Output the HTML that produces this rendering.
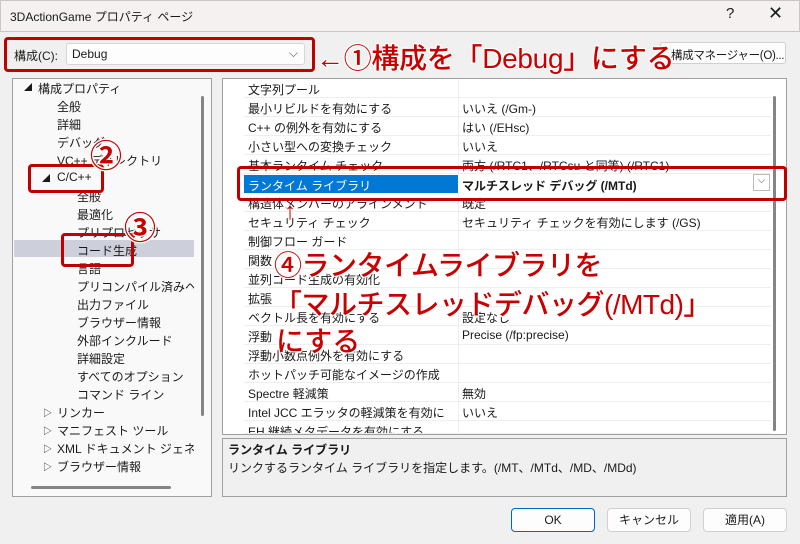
<!DOCTYPE html>
<html><head><meta charset="utf-8"><style>
*{margin:0;padding:0;box-sizing:border-box}
body{width:800px;height:544px;overflow:hidden;background:#f0f0f0;font-family:"Liberation Sans","Noto Sans CJK JP",sans-serif;font-size:12px;color:#1a1a1a;position:relative}
.a{position:absolute;white-space:nowrap}
.title{left:0;top:0;width:800px;height:32px;background:#f4f1f0;border:1px solid #c8c8c8}
.red{color:#c80000;font-weight:500;text-shadow:0 0 2px #fff,0 0 2px #fff,1px 1px 0 #fff,-1px -1px 0 #fff,1px -1px 0 #fff,-1px 1px 0 #fff}
.rbox{position:absolute;border:3px solid #c00000;border-radius:4px}
.row{position:absolute;left:244px;width:527px;height:19px;border-bottom:1px solid #eeeeee;overflow:hidden}
.row span{position:absolute;top:2px;overflow:hidden}
.n{left:4px;width:208px}.v{left:218px}
.t{position:absolute;font-size:12px;white-space:nowrap}
.btn{position:absolute;top:508px;width:84px;height:24px;background:#fdfdfd;border:1px solid #d0d0d0;border-radius:4px;text-align:center;line-height:22px}
</style></head><body>
<div class="a title"></div>
<div class="a" style="left:10px;top:8px;font-size:12px">3DActionGame プロパティ ページ</div>
<div class="a" style="left:726px;top:5px;font-size:15px">?</div>
<div class="a" style="left:768px;top:3px;font-size:18px;font-weight:300">✕</div>

<div class="a" style="left:14px;top:47px">構成(C):</div>
<div class="a" style="left:66px;top:43px;width:239px;height:22px;background:#fdfdfd;border:1px solid #d6d6d6;border-radius:3px"><span style="position:absolute;left:5px;top:3px">Debug</span><span style="position:absolute;right:6px;top:2px;color:#555">⌵</span></div>
<div class="rbox" style="left:4px;top:37px;width:311px;height:35px"></div>
<div class="a" style="left:660px;top:42px;width:126px;height:22px;background:#fdfdfd;border:1px solid #d0d0d0;border-radius:3px;padding:4px 0 0 10px;overflow:hidden;font-size:11.5px;letter-spacing:-0.3px">構成マネージャー(O)...</div>
<div class="a red" style="left:316px;top:37px;font-size:28px;letter-spacing:-0.3px">←①構成を「Debug」にする</div>

<!-- tree -->
<div class="a" style="left:12px;top:78px;width:200px;height:419px;border:1px solid #a0a0a0;background:#f9f9f9;overflow:hidden">
<div style="position:absolute;left:0;top:0;width:181px;height:396px;overflow:hidden">
<div class="a" style="left:1px;top:161px;width:180px;height:17px;background:#cdd0da"></div>
<div class="t" style="left:11px;top:3px;font-size:8px">◢</div><div class="t" style="left:25px;top:1px">構成プロパティ</div>
<div class="t" style="left:44px;top:19px">全般</div>
<div class="t" style="left:44px;top:37px">詳細</div>
<div class="t" style="left:44px;top:55px">デバッグ</div>
<div class="t" style="left:44px;top:73px">VC++ ディレクトリ</div>
<div class="t" style="left:29px;top:94px;font-size:8px">◢</div><div class="t" style="left:44px;top:91px">C/C++</div>
<div class="t" style="left:64px;top:109px">全般</div>
<div class="t" style="left:64px;top:127px">最適化</div>
<div class="t" style="left:64px;top:145px">プリプロセッサ</div>
<div class="t" style="left:64px;top:163px">コード生成</div>
<div class="t" style="left:64px;top:181px">言語</div>
<div class="t" style="left:64px;top:199px">プリコンパイル済みヘッダー</div>
<div class="t" style="left:64px;top:217px">出力ファイル</div>
<div class="t" style="left:64px;top:235px">ブラウザー情報</div>
<div class="t" style="left:64px;top:253px">外部インクルード</div>
<div class="t" style="left:64px;top:271px">詳細設定</div>
<div class="t" style="left:64px;top:289px">すべてのオプション</div>
<div class="t" style="left:64px;top:307px">コマンド ライン</div>
<div class="t" style="left:30px;top:327px;font-size:9px">▷</div><div class="t" style="left:44px;top:325px">リンカー</div>
<div class="t" style="left:30px;top:345px;font-size:9px">▷</div><div class="t" style="left:44px;top:343px">マニフェスト ツール</div>
<div class="t" style="left:30px;top:363px;font-size:9px">▷</div><div class="t" style="left:44px;top:361px">XML ドキュメント ジェネレーター</div>
<div class="t" style="left:30px;top:381px;font-size:9px">▷</div><div class="t" style="left:44px;top:379px">ブラウザー情報</div>
</div>
<div class="a" style="left:188px;top:17px;width:3px;height:320px;background:#858585;border-radius:2px"></div>
<div class="a" style="left:18px;top:407px;width:140px;height:3px;background:#858585;border-radius:2px"></div>
</div>
<div class="rbox" style="left:28px;top:164px;width:76px;height:29px"></div>
<div class="rbox" style="left:61px;top:233px;width:73px;height:34px"></div>
<div class="a red" style="left:90px;top:131px;font-size:32px;font-weight:bold">②</div>
<div class="a red" style="left:124px;top:203px;font-size:32px;font-weight:bold">③</div>

<!-- grid -->
<div class="a" style="left:222px;top:78px;width:565px;height:357px;border:1px solid #a0a0a0;background:#fff;overflow:hidden">
<div class="a" style="left:235px;top:0;width:1px;height:360px;background:#eee"></div>
</div>
<div class="row" style="top:79px"><span class="n">文字列プール</span></div>
<div class="row" style="top:98px"><span class="n">最小リビルドを有効にする</span><span class="v">いいえ (/Gm-)</span></div>
<div class="row" style="top:117px"><span class="n">C++ の例外を有効にする</span><span class="v">はい (/EHsc)</span></div>
<div class="row" style="top:136px"><span class="n">小さい型への変換チェック</span><span class="v">いいえ</span></div>
<div class="row" style="top:155px"><span class="n">基本ランタイム チェック</span><span class="v">両方 (/RTC1、/RTCsu と同等) (/RTC1)</span></div>
<div class="a" style="left:244px;top:175px;width:214px;height:18px;background:#0078d4;color:#fff;padding:2px 4px">ランタイム ライブラリ</div>
<div class="a" style="left:458px;top:175px;width:313px;height:18px;background:#fff;font-weight:bold;padding:2px 4px">マルチスレッド デバッグ (/MTd)</div>
<div class="a" style="left:753px;top:174px;width:17px;height:17px;border:1px solid #bbb;font-size:10px;text-align:center;color:#555">⌵</div>
<div class="row" style="top:193px"><span class="n">構造体メンバーのアラインメント</span><span class="v">既定</span></div>
<div class="row" style="top:212px"><span class="n">セキュリティ チェック</span><span class="v">セキュリティ チェックを有効にします (/GS)</span></div>
<div class="row" style="top:231px"><span class="n">制御フロー ガード</span></div>
<div class="row" style="top:250px"><span class="n">関数</span></div>
<div class="row" style="top:269px"><span class="n">並列コード生成の有効化</span></div>
<div class="row" style="top:288px"><span class="n">拡張</span></div>
<div class="row" style="top:307px"><span class="n">ベクトル長を有効にする</span><span class="v">設定なし</span></div>
<div class="row" style="top:326px"><span class="n">浮動</span><span class="v">Precise (/fp:precise)</span></div>
<div class="row" style="top:345px"><span class="n">浮動小数点例外を有効にする</span></div>
<div class="row" style="top:364px"><span class="n">ホットパッチ可能なイメージの作成</span></div>
<div class="row" style="top:383px"><span class="n">Spectre 軽減策</span><span class="v">無効</span></div>
<div class="row" style="top:402px"><span class="n">Intel JCC エラッタの軽減策を有効にする</span><span class="v">いいえ</span></div>
<div class="row" style="top:421px;height:13px"><span class="n">EH 継続メタデータを有効にする</span></div>
<div class="a" style="left:773px;top:96px;width:3px;height:335px;background:#858585;border-radius:2px"></div>
<div class="rbox" style="left:237px;top:166px;width:550px;height:35px"></div>
<div class="a red" style="left:284px;top:198px;font-size:24px;font-weight:normal">↑</div>
<div class="a red" style="left:274px;top:244px;font-size:28px;letter-spacing:-0.5px">④ランタイムライブラリを</div>
<div class="a red" style="left:274px;top:283px;font-size:28px;letter-spacing:-0.5px">「マルチスレッドデバッグ(/MTd)」</div>
<div class="a red" style="left:276px;top:320px;font-size:28px">にする</div>

<!-- desc -->
<div class="a" style="left:222px;top:438px;width:565px;height:59px;border:1px solid #a0a0a0;background:#f0f0f0"></div>
<div class="a" style="left:228px;top:441px;font-weight:bold">ランタイム ライブラリ</div>
<div class="a" style="left:228px;top:459px">リンクするランタイム ライブラリを指定します。(/MT、/MTd、/MD、/MDd)</div>

<div class="btn" style="left:511px;border:1px solid #0067c0">OK</div>
<div class="btn" style="left:607px">キャンセル</div>
<div class="btn" style="left:703px">適用(A)</div>
</body></html>
